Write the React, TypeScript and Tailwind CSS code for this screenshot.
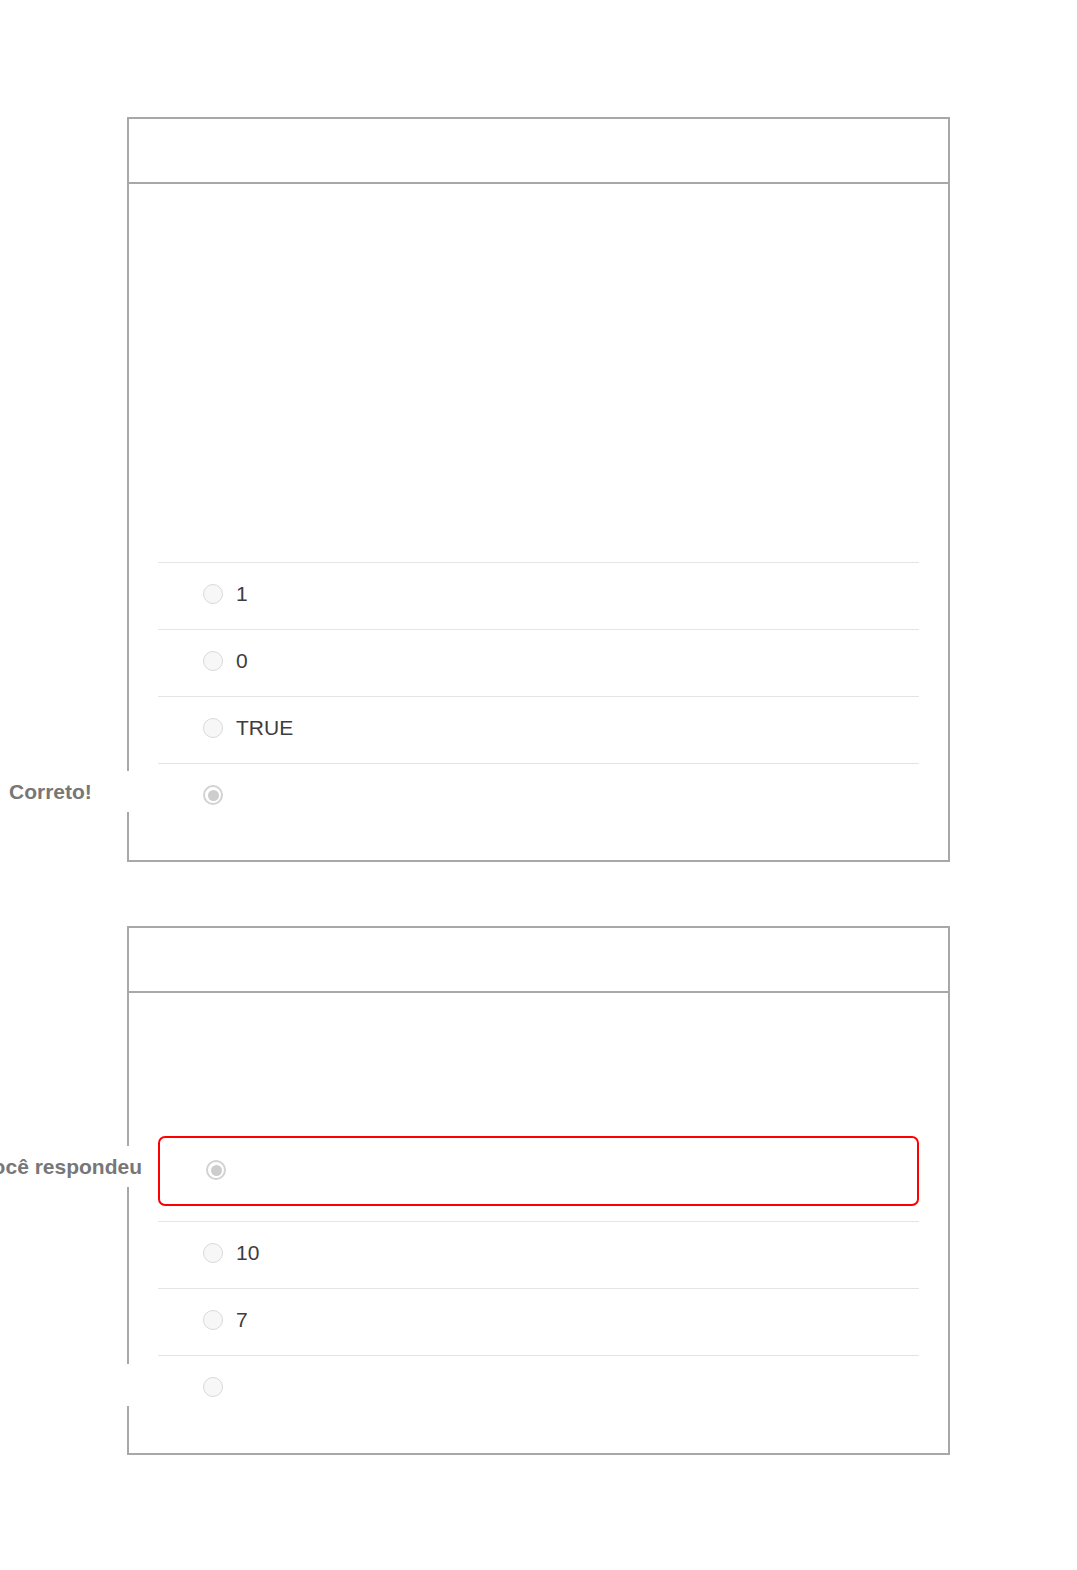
import React from 'react';

type Option = {
  text?: string;
  checked?: boolean;
  label?: string;
  wrong?: boolean;
  blankLabel?: boolean;
};

const Radio: React.FC<{ checked?: boolean }> = ({ checked }) =>
  checked ? (
    <span className="flex h-[20px] w-[20px] shrink-0 items-center justify-center rounded-full border-2 border-[#d2d2d2] bg-white">
      <span className="h-[11px] w-[11px] rounded-full bg-[#cdcdcd]" />
    </span>
  ) : (
    <span className="h-[20px] w-[20px] shrink-0 rounded-full border border-[#d9d9d9] bg-[#f7f7f7]" />
  );

const OptionRow: React.FC<{ option: Option }> = ({ option }) => {
  if (option.wrong) {
    return (
      <div className="relative mb-[15px] flex h-[70px] items-center rounded-[7px] border-2 border-[#ff0000] pb-[2px] pl-[46px]">
        <Radio checked={option.checked} />
        <span className="ml-[13px] text-[21px] text-[#3d3d3d]">{option.text}</span>
        {option.label && (
          <div className="absolute right-[calc(100%+2px)] top-[8px] flex h-[41px] w-[158px] items-center justify-end bg-white pr-[16px]">
            <span className="whitespace-nowrap text-[21px] font-bold text-[#777]">{option.label}</span>
          </div>
        )}
      </div>
    );
  }
  return (
    <div className="relative flex h-[67px] items-center border-t border-[#e4e4e4] pb-[4px] pl-[45px]">
      <Radio checked={option.checked} />
      {option.text && <span className="ml-[13px] text-[21px] text-[#3d3d3d]">{option.text}</span>}
      {option.label && (
        <div className="absolute right-full top-[7px] flex h-[41px] w-[158px] items-center bg-white pl-[9px]">
          <span className="whitespace-nowrap text-[21px] font-bold text-[#777]">{option.label}</span>
        </div>
      )}
      {option.blankLabel && <div className="absolute right-full top-[8px] h-[42px] w-[158px] bg-white" />}
    </div>
  );
};

const QuestionCard: React.FC<{ blank: number; bottom: number; options: Option[] }> = ({ blank, bottom, options }) => (
  <div className="mx-auto w-[823px] border-2 border-[#a8a8a8] bg-white">
    <div className="h-[65px] border-b-2 border-[#a8a8a8]" />
    <div style={{ height: blank }} />
    <div className="px-[29px]" style={{ paddingBottom: bottom }}>
      {options.map((o, i) => (
        <OptionRow key={i} option={o} />
      ))}
    </div>
  </div>
);

export default function App() {
  return (
    <div className="min-h-[1570px] w-full bg-white pt-[117px] font-['Liberation_Sans',Arial,sans-serif]">
      <QuestionCard
        blank={378}
        bottom={30}
        options={[
          { text: '1' },
          { text: '0' },
          { text: 'TRUE' },
          { checked: true, label: 'Correto!' },
        ]}
      />
      <div className="h-[64px]" />
      <QuestionCard
        blank={143}
        bottom={31}
        options={[
          { wrong: true, checked: true, label: 'Você respondeu' },
          { text: '10' },
          { text: '7' },
          { blankLabel: true },
        ]}
      />
    </div>
  );
}
